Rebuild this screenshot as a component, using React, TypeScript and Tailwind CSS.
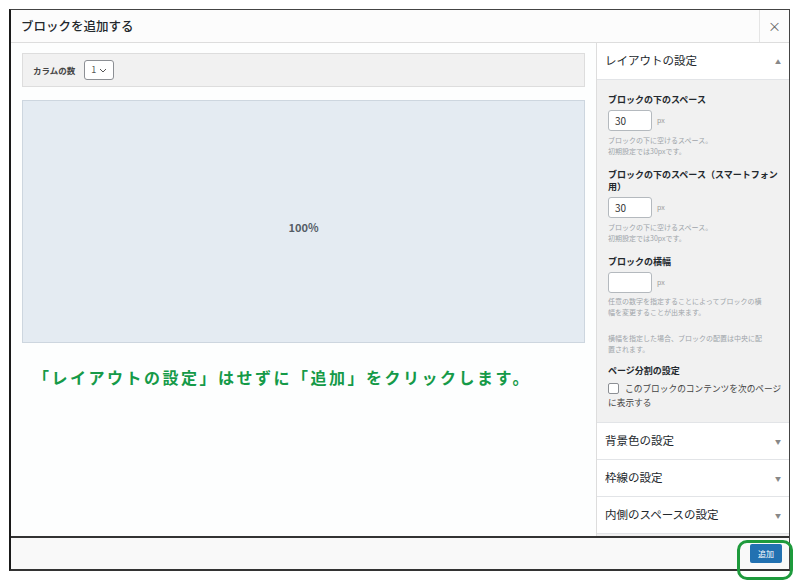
import React from 'react';

const font = { fontFamily: '"Noto Sans CJK JP", "Noto Sans", sans-serif' };

function Field({ label, value, help }: { label: React.ReactNode; value: string; help: React.ReactNode }) {
  return (
    <div className="mb-[13px]">
      <div className="text-[9px] font-bold leading-[12px] text-[#23282d]">{label}</div>
      <div className="mt-[4px] flex items-center gap-[5px]">
        <div className="flex h-[21px] w-[44px] items-center rounded-[3px] border border-[#b4b9be] bg-white px-[6px] text-[10px] text-[#333]">{value}</div>
        <span className="text-[7px] text-[#999]">px</span>
      </div>
      <div className="mt-[4px] text-[7px] leading-[10.5px] text-[#a0a5aa]">{help}</div>
    </div>
  );
}

function Section({ title }: { title: string }) {
  return (
    <div className="flex h-[37px] items-center justify-between border-t border-[#e2e4e7] bg-white px-[8px]">
      <span className="text-[11.5px] text-[#23282d]">{title}</span>
      <span className="text-[6px] text-[#888]">▼</span>
    </div>
  );
}

export default function App() {
  return (
    <div className="relative h-[581px] w-[800px] bg-white pl-[9px] pt-[9px]" style={font}>
      <div className="flex h-[562px] w-[781px] flex-col border-y border-r border-l-2 border-[#444] border-l-[#1a1a1a] border-b-2 border-b-[#333]">
        {/* header */}
        <div className="flex h-[33px] shrink-0 items-stretch justify-between border-b border-[#dddddd] bg-[#fcfcfc]">
          <div className="flex items-center pl-[10px] text-[12.5px] font-medium text-[#23282d]">ブロックを追加する</div>
          <div className="flex w-[30px] items-center justify-center border-l border-[#e5e5e5] text-[13px] text-[#666]">×</div>
        </div>

        {/* body */}
        <div className="flex min-h-0 flex-1">
          <div className="flex-1 bg-[#fdfefe] px-[11px] pt-[10px]">
            <div className="flex h-[34px] items-center border border-[#dddddd] bg-[#f1f1f1] pl-[10px]">
              <span className="text-[8.5px] font-bold text-[#444]">カラムの数</span>
              <div className="ml-[9px] flex h-[20px] w-[30px] items-center justify-center gap-[3px] rounded-[3px] border border-[#8c8f94] bg-white text-[9px] text-[#555]">
                <span>1</span>
                <svg width="8" height="5" viewBox="0 0 8 5" fill="none" stroke="#555" strokeWidth="1">
                  <path d="M1 1l3 3 3-3" />
                </svg>
              </div>
            </div>
            <div className="mt-[13px] flex h-[243px] items-center justify-center border border-[#cdd6df] bg-[#e4ebf2] pt-[12px]">
              <span className="text-[11px] font-bold text-[#555d66]">100%</span>
            </div>
            <div className="mt-[22px] whitespace-nowrap pl-[11px] text-[16px] font-bold tracking-[2.5px] text-[#159a48]">
              「レイアウトの設定」はせずに「追加」をクリックします。
            </div>
          </div>

          <div className="flex w-[193px] shrink-0 flex-col border-l border-[#dddddd] bg-[#f1f1f1]">
            <div className="flex h-[37px] shrink-0 items-center justify-between border-b border-[#e2e4e7] bg-white px-[8px]">
              <span className="text-[11.5px] text-[#23282d]">レイアウトの設定</span>
              <span className="text-[6px] text-[#888]">▲</span>
            </div>
            <div className="h-[342px] shrink-0 pl-[11px] pr-[4px] pt-[14px]">
              <Field label="ブロックの下のスペース" value="30" help={<>ブロックの下に空けるスペース。<br />初期設定では30pxです。</>} />
              <Field label={<>ブロックの下のスペース（スマートフォン<br />用）</>} value="30" help={<>ブロックの下に空けるスペース。<br />初期設定では30pxです。</>} />
              <div className="mb-[10px]">
                <div className="text-[9px] font-bold leading-[12px] text-[#23282d]">ブロックの横幅</div>
                <div className="mt-[4px] flex items-center gap-[5px]">
                  <div className="h-[21px] w-[44px] rounded-[3px] border border-[#b4b9be] bg-white" />
                  <span className="text-[7px] text-[#999]">px</span>
                </div>
                <div className="mt-[3px] text-[7px] leading-[11px] text-[#a0a5aa]">任意の数字を指定することによってブロックの横<br />幅を変更することが出来ます。</div>
                <div className="mt-[15px] text-[7px] leading-[11px] text-[#a0a5aa]">横幅を指定した場合、ブロックの配置は中央に配<br />置されます。</div>
              </div>
              <div className="text-[9px] font-bold leading-[12px] text-[#23282d]">ページ分割の設定</div>
              <div className="mt-[4px] whitespace-nowrap text-[8.7px] leading-[14px] text-[#444]">
                <span className="mr-[6px] inline-block h-[11px] w-[11px] translate-y-[2px] rounded-[2px] border border-[#8c8f94] bg-white align-baseline" />
                このブロックのコンテンツを次のページ<br />に表示する
              </div>
            </div>
            <Section title="背景色の設定" />
            <Section title="枠線の設定" />
            <Section title="内側のスペースの設定" />
            <div className="flex-1 border-t border-[#e2e4e7]" />
          </div>
        </div>

        {/* footer */}
        <div className="flex h-[33px] shrink-0 items-center justify-end border-t-2 border-[#333] bg-[#f9f9f9] pr-[7px]">
          <div className="flex h-[19px] w-[32px] items-center justify-center rounded-[2px] bg-[#2271b1] text-[8px] text-white">追加</div>
        </div>
      </div>
      <div className="absolute left-[737px] top-[540px] h-[40px] w-[56px] rounded-[10px] border-[3px] border-[#1e9a3c]" />
    </div>
  );
}
